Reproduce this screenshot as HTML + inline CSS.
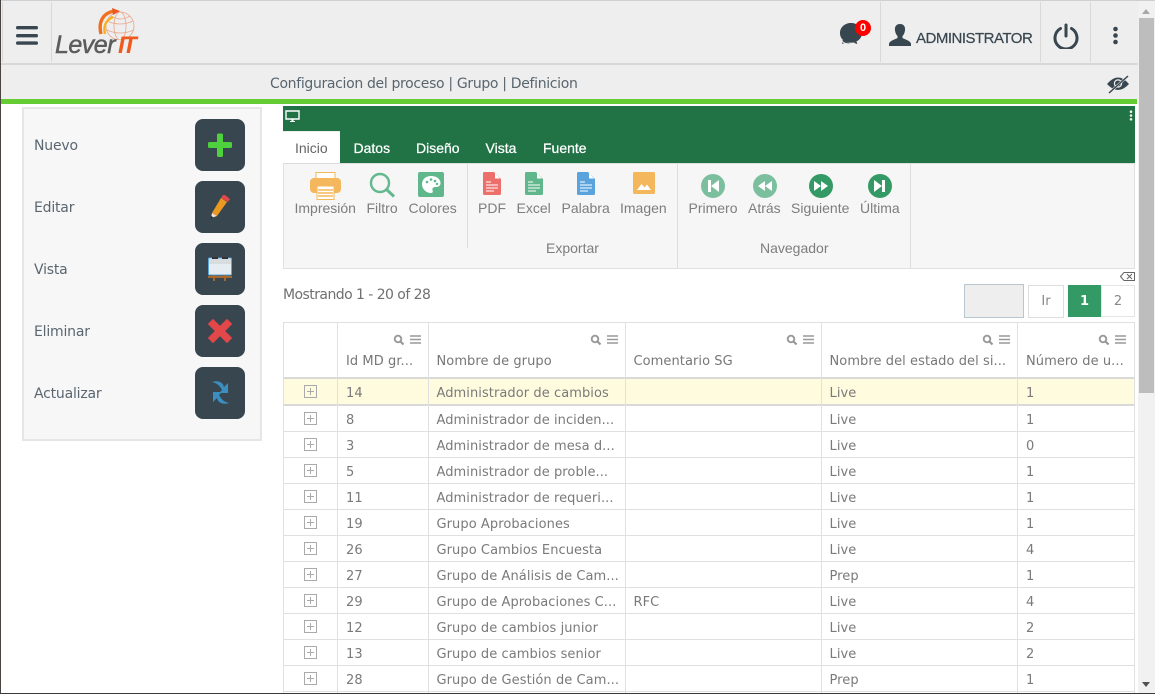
<!DOCTYPE html>
<html><head><meta charset="utf-8"><style>
html,body{margin:0;padding:0;width:1155px;height:694px;overflow:hidden;background:#fff}
body{position:relative;font-family:"DejaVu Sans",sans-serif;color:#777}
div,span,svg{position:absolute;box-sizing:border-box}
.v{width:1px;background:#e0e0e0}
.hd{left:283px;width:852px;height:1px;background:#e0e0e0}
.r{left:283px;width:852px;height:26px;font-size:13px;letter-spacing:.07px;line-height:30px;color:#7a7a7a;white-space:nowrap}
.r span{top:0}
.a{left:63px}.b{left:153.500px}.c{left:350.500px}.d{left:546.500px}.e{left:743px}
.p{left:21px;top:6px;width:13px;height:13px}
.m{font-size:14px;color:#5a6670;left:34px;letter-spacing:-.2px;white-space:nowrap}
.bt{left:195px;width:50px;height:52px;background:#38464f;border-radius:8px}
.t{font:14px "Liberation Sans",sans-serif;color:#7d7d7d;white-space:nowrap;top:200px}
.tab{font:14px "Liberation Sans",sans-serif;color:#fff;top:140px;white-space:nowrap;-webkit-text-stroke:.25px #fff}
.th{font-size:13px;letter-spacing:.07px;color:#777;top:352px;white-space:nowrap}
</style></head><body>
<div style="left:0;top:0;width:1138px;height:99px;background:#eee"></div>
<div style="left:0;top:0;width:1155px;height:1px;background:#ccd0d3"></div>
<div style="left:0;top:63px;width:1138px;height:2px;background:#d8d8d8"></div>
<div class="v" style="left:2px;top:2px;height:60px;background:#d8d8d8"></div>
<div class="v" style="left:51px;top:2px;height:60px;background:#d8d8d8"></div>
<div class="v" style="left:880px;top:2px;height:60px;background:#d8d8d8"></div>
<div class="v" style="left:1040px;top:2px;height:60px;background:#d8d8d8"></div>
<div class="v" style="left:1090px;top:2px;height:60px;background:#d8d8d8"></div>
<div style="left:1px;top:99px;width:1136px;height:5px;background:#66cc33"></div>

<svg style="left:16px;top:26px" width="22" height="19"><g fill="#38464f"><rect x="0" y="0" width="22" height="3.4" rx="1.7"/><rect x="0" y="8" width="22" height="3.4" rx="1.7"/><rect x="0" y="15.4" width="22" height="3.4" rx="1.7"/></g></svg>

<svg style="left:97px;top:8px" width="42" height="32" viewBox="0 0 42 32">
<g fill="none" stroke="#e9a589" stroke-width=".8"><circle cx="23" cy="18" r="14"/><ellipse cx="23" cy="18" rx="6" ry="14"/><path d="M10 13Q23 19 36 13M10 22Q23 28 37 22M14 8Q24 14 33 8"/></g>
<path d="M4 26C1 14 6 5 17 3" fill="none" stroke="#f0701e" stroke-width="3.4"/>
<path d="M8 26C6 18 9 12 16 9" fill="none" stroke="#f7b21a" stroke-width="2.4"/>
<path d="M15 0l8 3-7 4z" fill="#ea5a20"/>
</svg>
<span style="left:55px;top:31px;font:italic 25px 'Liberation Sans',sans-serif;letter-spacing:-.5px;color:#5c5c5c;white-space:nowrap;-webkit-text-stroke:.5px #5c5c5c">Lever</span>
<span style="left:118px;top:32px;font:italic bold 24px 'Liberation Sans',sans-serif;letter-spacing:-2.500px;color:#ee5a1f;white-space:nowrap">IT</span>

<svg style="left:840px;top:23px" width="24" height="25" viewBox="0 0 24 25"><path d="M11 0C5 0 0 4 0 10c0 3 1 5 3 7l-1 4 5-2c1 .4 3 .7 4 .7 6 0 11-4 11-9.700C22 4 17 0 11 0z" fill="#38464f"/><path d="M1 17q4 5 10 3.500M13 20l5 2-1-4" fill="#38464f" stroke="#eee"/></svg>
<div style="left:855px;top:20px;width:16px;height:16px;border-radius:50%;background:#f00;color:#fff;font:bold 11px/16px 'Liberation Sans',sans-serif;text-align:center">0</div>

<svg style="left:889px;top:24px" width="22" height="22" viewBox="0 0 22 22"><path d="M11 0c4 0 5.500 3 5 6.500-.3 2.500-1.500 4.500-2.500 5.500v2c1 1 7 2 8.500 5.500v2.500H0v-2.500C1.500 16 7.500 15 8.500 14v-2c-1-1-2.200-3-2.500-5.500C5.500 3 7 0 11 0z" fill="#38464f"/></svg>
<span style="left:916px;top:30px;font:15px 'Liberation Sans',sans-serif;color:#38464f;white-space:nowrap;letter-spacing:-.5px;-webkit-text-stroke:.2px #38464f">ADMINISTRATOR</span>

<svg style="left:1053px;top:23px" width="26" height="26" viewBox="0 0 26 26" fill="none" stroke="#38464f" stroke-width="3" stroke-linecap="round"><path d="M7.500 5.500a11 11 0 1 0 11 0"/><path d="M13 2v11"/></svg>
<svg style="left:1112px;top:26px" width="7" height="19"><g fill="#38464f"><circle cx="3.500" cy="3" r="2.300"/><circle cx="3.500" cy="9.500" r="2.300"/><circle cx="3.500" cy="16" r="2.300"/></g></svg>

<span style="left:270px;top:76px;font-size:14px;letter-spacing:-.33px;line-height:17px;color:#59656e;white-space:nowrap">Configuracion del proceso | Grupo | Definicion</span>
<svg style="left:1107px;top:74px" width="22" height="20" viewBox="0 0 22 20"><path d="M0 10Q11-3 22 10Q11 22 0 10z" fill="#38464f"/><circle cx="11" cy="9.500" r="4.200" fill="#eee"/><circle cx="11" cy="9.500" r="3" fill="#38464f"/><path d="M2 19L21 2" stroke="#eee" stroke-width="2.400"/><path d="M2 19L21 2" stroke="#38464f" stroke-width="1.500"/></svg>

<div style="left:1138px;top:1px;width:17px;height:692px;background:#f1f1f1"></div>
<div style="left:1139px;top:18px;width:15px;height:375px;background:#bdbdbd"></div>
<svg style="left:1141px;top:9px" width="10" height="5"><path d="M5 0l4 5H1z" fill="#a8a8a8"/></svg>
<svg style="left:1141px;top:682px" width="10" height="5"><path d="M5 5L1 0h8z" fill="#505050"/></svg>

<!-- left panel -->
<div style="left:22px;top:107px;width:240px;height:334px;background:#f7f7f7;border:2px solid #e6e6e6"></div>
<span class="m" style="top:137.500px">Nuevo</span>
<span class="m" style="top:199.500px">Editar</span>
<span class="m" style="top:261.500px">Vista</span>
<span class="m" style="top:323.500px">Eliminar</span>
<span class="m" style="top:385.500px">Actualizar</span>
<div class="bt" style="top:119px"></div><div class="bt" style="top:181px"></div><div class="bt" style="top:243px"></div><div class="bt" style="top:305px"></div><div class="bt" style="top:367px"></div>
<svg style="left:208px;top:133px" width="24" height="24"><path d="M9 2a1.500 1.500 0 0 1 1.500-1.500h3A1.500 1.500 0 0 1 15 2v7h7.500a1.500 1.500 0 0 1 1.500 1.500v3a1.500 1.500 0 0 1-1.500 1.500H15v7.500a1.500 1.500 0 0 1-1.500 1.500h-3A1.500 1.500 0 0 1 9 22.500V15H1.500A1.500 1.500 0 0 1 0 13.500v-3A1.500 1.500 0 0 1 1.500 9H9z" fill="#4fd13e"/></svg>
<svg style="left:209px;top:194px" width="22" height="26" viewBox="0 0 22 26"><path d="M12 4l6 4L8 22l-5-3z" fill="#eb9a21"/><path d="M14 1l2-0 5 4-2 3-7-4z" fill="#e2474a"/><path d="M3 19l5 3-6 2z" fill="#f3e4d0"/><path d="M2 22l2 1-2 2z" fill="#222"/></svg>
<svg style="left:208px;top:256px" width="24" height="25" viewBox="0 0 24 25"><rect x=".5" y="2" width="23" height="17" rx="1" fill="#e6edf2" stroke="#5aa7dc" stroke-width="1"/><rect x="1" y="3" width="22" height="5" fill="#d7dcdf"/><rect x="4" y="1" width="6" height="2" fill="#333"/><rect x="14" y="1" width="6" height="2" fill="#333"/><path d="M0 20h24v2H0z" fill="#a8672b"/><path d="M5 19h2v6H5zM16 19h2v6h-2z" fill="#a8672b"/></svg>
<svg style="left:208px;top:319px" width="24" height="24"><path d="M5 0.500L12 7.500 19 .5 23.500 5 16.500 12 23.500 19 19 23.500 12 16.500 5 23.500 .5 19 7.500 12 .5 5z" fill="#e2474a" stroke="#e2474a" stroke-linejoin="round"/></svg>
<svg style="left:210px;top:380px" width="21" height="25" viewBox="0 0 21 25"><path d="M2 2C8 0 13 2 14 7l4-4v10h-9l3-3C10 6 7 3 2 2z" fill="#3b8fc0"/><path d="M19 23c-6 2-11 0-12-5l-4 4V12h9l-3 3c2 4 5 7 10 8z" fill="#3b8fc0"/></svg>

<!-- ribbon -->
<div style="left:283px;top:106px;width:852px;height:57px;background:#217346"></div>
<div style="left:283px;top:131px;width:57px;height:32px;background:#fff;border-top:1px solid #eee"></div>
<div style="left:283px;top:163px;width:852px;height:106px;background:#f6f6f6;border:1px solid #e0e0e0;border-top:1px solid #ddd"></div>
<div class="v" style="left:467px;top:164px;height:84px;background:#ddd"></div>
<div class="v" style="left:677px;top:164px;height:104px;background:#ddd"></div>
<div class="v" style="left:910px;top:164px;height:104px;background:#ddd"></div>
<svg style="left:285px;top:110px" width="16" height="12"><path d="M1 1h13v8H1z" fill="none" stroke="#fff" stroke-width="1.400"/><path d="M5 11h5v1H5z" fill="#fff"/><path d="M6.500 9h2v2h-2z" fill="#fff"/></svg>
<svg style="left:1129px;top:110px" width="4" height="11"><g fill="#eee"><circle cx="2" cy="1.700" r="1.300"/><circle cx="2" cy="5.500" r="1.300"/><circle cx="2" cy="9.300" r="1.300"/></g></svg>
<span class="tab" style="left:295px;color:#666;-webkit-text-stroke:0">Inicio</span>
<span class="tab" style="left:353.500px">Datos</span>
<span class="tab" style="left:416px">Diseño</span>
<span class="tab" style="left:485.500px">Vista</span>
<span class="tab" style="left:543px">Fuente</span>

<svg style="left:310px;top:172px" width="31" height="28" viewBox="0 0 31 28"><rect x="6" y="0.500" width="19" height="8" fill="#fff" stroke="#f5b75c"/><rect x="0" y="6" width="31" height="15" rx="4" fill="#f5b75c"/><rect x="7" y="14" width="17" height="13.500" fill="#fff" stroke="#f5b75c"/><path d="M8 18h15M8 21h15M8 24h15" stroke="#f5b75c" stroke-width="1.500"/></svg>
<svg style="left:369px;top:172px" width="27" height="26" fill="none" stroke="#63b88e" stroke-width="2.400"><circle cx="11" cy="11" r="9"/><path d="M17 17l8 7.500" stroke-width="3"/></svg>
<svg style="left:418px;top:172px" width="26" height="25" viewBox="0 0 26 25"><rect width="26" height="25" rx="2" fill="#5fb78b"/><path d="M13 4C7 4 4 8 4 12c0 5 4 9 9 9 2 0 2-1.500 1.500-3-.5-2 1-3 3-3 3 0 5-1 5-4 0-4-4-7-9.500-7z" fill="#fff"/><g fill="#5fb78b"><circle cx="9" cy="10" r="1.300"/><circle cx="13" cy="7.500" r="1.300"/><circle cx="17" cy="9" r="1.300"/><circle cx="19" cy="12" r="1.200"/></g></svg>
<svg style="left:483px;top:172px" width="18" height="23" viewBox="0 0 18 23"><path d="M1.500 0H11l7 7v14.500a1.500 1.500 0 0 1-1.500 1.500h-15A1.500 1.500 0 0 1 0 21.500v-20A1.500 1.500 0 0 1 1.500 0z" fill="#ec6f6c"/><path d="M12 1l5 5.500h-5z" fill="#fff"/><path d="M3 10h5M3 13h12M3 16h12M3 19h8" stroke="#fff" stroke-width="1"/></svg>
<svg style="left:525px;top:172px" width="18" height="23" viewBox="0 0 18 23"><path d="M1.500 0H11l7 7v14.500a1.500 1.500 0 0 1-1.500 1.500h-15A1.500 1.500 0 0 1 0 21.500v-20A1.500 1.500 0 0 1 1.500 0z" fill="#5fb78b"/><path d="M12 1l5 5.500h-5z" fill="#fff"/><path d="M3 10h5M3 13h12M3 16h12M3 19h8" stroke="#fff" stroke-width="1"/></svg>
<svg style="left:577px;top:172px" width="18" height="23" viewBox="0 0 18 23"><path d="M1.500 0H11l7 7v14.500a1.500 1.500 0 0 1-1.500 1.500h-15A1.500 1.500 0 0 1 0 21.500v-20A1.500 1.500 0 0 1 1.500 0z" fill="#5aa3dc"/><path d="M12 1l5 5.500h-5z" fill="#fff"/><path d="M3 10h5M3 13h12M3 16h12M3 19h8" stroke="#fff" stroke-width="1"/></svg>
<svg style="left:633px;top:172px" width="22" height="22" viewBox="0 0 22 22"><rect width="22" height="22" rx="1.500" fill="#f5b75c"/><path d="M4 18l4.500-6 3 3.500 2.500-3 4 5.500z" fill="#fff"/></svg>

<svg style="left:701px;top:174px" width="24" height="24"><circle cx="12" cy="12" r="12" fill="#7cbf9f"/><path d="M7 6h3v12H7zM18 6v12l-8-6z" fill="#fff"/></svg>
<svg style="left:753px;top:174px" width="24" height="24"><circle cx="12" cy="12" r="12" fill="#7cbf9f"/><path d="M12 7v10l-7-5zM19 7v10l-7-5z" fill="#fff"/></svg>
<svg style="left:809px;top:174px" width="24" height="24"><circle cx="12" cy="12" r="12" fill="#349a65"/><path d="M5 7v10l7-5zM12 7v10l7-5z" fill="#fff"/></svg>
<svg style="left:868px;top:174px" width="24" height="24"><circle cx="12" cy="12" r="12" fill="#349a65"/><path d="M14 6h3v12h-3zM6 6v12l8-6z" fill="#fff"/></svg>

<span class="t" style="left:294.500px">Impresión</span>
<span class="t" style="left:366.500px">Filtro</span>
<span class="t" style="left:408.500px">Colores</span>
<span class="t" style="left:478px">PDF</span>
<span class="t" style="left:516.500px">Excel</span>
<span class="t" style="left:561.500px">Palabra</span>
<span class="t" style="left:620px">Imagen</span>
<span class="t" style="left:688.500px">Primero</span>
<span class="t" style="left:748px">Atrás</span>
<span class="t" style="left:791px">Siguiente</span>
<span class="t" style="left:860px">Última</span>
<span class="t" style="left:546px;top:240px">Exportar</span>
<span class="t" style="left:760px;top:240px">Navegador</span>

<!-- pager -->
<svg style="left:1120px;top:272px" width="15" height="10" fill="none" stroke="#666"><path d="M4 .5h10.500v8H4L.5 4.500z"/><path d="M7 2l5 5M12 2L7 7"/></svg>
<span style="left:283px;top:287px;font-size:14px;letter-spacing:-.55px;color:#707070;white-space:nowrap">Mostrando 1 - 20 of 28</span>
<div style="left:964px;top:284px;width:60px;height:34px;background:#eee;border:1px solid #b8c6cf"></div>
<div style="left:1028px;top:285px;width:36px;height:33px;border:1px solid #ddd;font-size:13px;line-height:31px;text-align:center;color:#888">Ir</div>
<div style="left:1068px;top:285px;width:33px;height:32px;background:#349a65;color:#fff;font-size:13px;line-height:33px;text-align:center;font-weight:bold">1</div>
<div style="left:1101px;top:285px;width:34px;height:32px;border:1px solid #e5e5e5;color:#888;font-size:13px;line-height:31px;text-align:center">2</div>

<!-- table -->
<div style="left:284px;top:378px;width:850px;height:26px;background:#fefbdf"></div>
<div class="hd" style="top:322px"></div>
<div class="hd" style="top:377px;height:2px;background:#d9d9d9"></div>
<div class="hd" style="top:404px;height:2px;background:#d9d9d9"></div>
<div class="hd" style="top:431px"></div><div class="hd" style="top:457px"></div><div class="hd" style="top:483px"></div><div class="hd" style="top:509px"></div><div class="hd" style="top:535px"></div><div class="hd" style="top:561px"></div><div class="hd" style="top:587px"></div><div class="hd" style="top:613px"></div><div class="hd" style="top:639px"></div><div class="hd" style="top:665px"></div><div class="hd" style="top:691px"></div>
<div class="v" style="left:283px;top:322px;height:371px"></div>
<div class="v" style="left:337px;top:322px;height:371px"></div>
<div class="v" style="left:428px;top:322px;height:371px"></div>
<div class="v" style="left:625px;top:322px;height:371px"></div>
<div class="v" style="left:821px;top:322px;height:371px"></div>
<div class="v" style="left:1017px;top:322px;height:371px"></div>
<div class="v" style="left:1134px;top:322px;height:371px"></div>

<span class="th" style="left:346px;top:353.500px">Id MD gr...</span>
<span class="th" style="left:436.500px;top:353.500px">Nombre de grupo</span>
<span class="th" style="left:633.500px;top:353.500px">Comentario SG</span>
<span class="th" style="left:829.500px;top:353.500px">Nombre del estado del si...</span>
<span class="th" style="left:1026px;top:353.500px">Número de u...</span>

<svg style="left:393px;top:334px" width="29" height="12"><g fill="none" stroke="#999"><circle cx="5" cy="5" r="3.300" stroke-width="1.900"/><path d="M7.500 7.500l3 3" stroke-width="2.200"/><path d="M17 2h11M17 5.500h11M17 9h11" stroke-width="1.500"/></g></svg>
<svg style="left:590px;top:334px" width="29" height="12"><g fill="none" stroke="#999"><circle cx="5" cy="5" r="3.300" stroke-width="1.900"/><path d="M7.500 7.500l3 3" stroke-width="2.200"/><path d="M17 2h11M17 5.500h11M17 9h11" stroke-width="1.500"/></g></svg>
<svg style="left:786px;top:334px" width="29" height="12"><g fill="none" stroke="#999"><circle cx="5" cy="5" r="3.300" stroke-width="1.900"/><path d="M7.500 7.500l3 3" stroke-width="2.200"/><path d="M17 2h11M17 5.500h11M17 9h11" stroke-width="1.500"/></g></svg>
<svg style="left:982px;top:334px" width="29" height="12"><g fill="none" stroke="#999"><circle cx="5" cy="5" r="3.300" stroke-width="1.900"/><path d="M7.500 7.500l3 3" stroke-width="2.200"/><path d="M17 2h11M17 5.500h11M17 9h11" stroke-width="1.500"/></g></svg>
<svg style="left:1098px;top:334px" width="29" height="12"><g fill="none" stroke="#999"><circle cx="5" cy="5" r="3.300" stroke-width="1.900"/><path d="M7.500 7.500l3 3" stroke-width="2.200"/><path d="M17 2h11M17 5.500h11M17 9h11" stroke-width="1.500"/></g></svg>

<div class="r" style="top:379px"><svg class="p" width="13" height="13"><path d="M.5.500h12v12H.5zM3 6.500h7M6.500 3v7" fill="none" stroke="#aaa"/></svg><span class="a">14</span><span class="b">Administrador de cambios</span><span class="d">Live</span><span class="e">1</span></div>
<div class="r" style="top:406px"><svg class="p" width="13" height="13"><path d="M.5.500h12v12H.5zM3 6.500h7M6.500 3v7" fill="none" stroke="#aaa"/></svg><span class="a">8</span><span class="b">Administrador de inciden...</span><span class="d">Live</span><span class="e">1</span></div>
<div class="r" style="top:432px"><svg class="p" width="13" height="13"><path d="M.5.500h12v12H.5zM3 6.500h7M6.500 3v7" fill="none" stroke="#aaa"/></svg><span class="a">3</span><span class="b">Administrador de mesa d...</span><span class="d">Live</span><span class="e">0</span></div>
<div class="r" style="top:458px"><svg class="p" width="13" height="13"><path d="M.5.500h12v12H.5zM3 6.500h7M6.500 3v7" fill="none" stroke="#aaa"/></svg><span class="a">5</span><span class="b">Administrador de proble...</span><span class="d">Live</span><span class="e">1</span></div>
<div class="r" style="top:484px"><svg class="p" width="13" height="13"><path d="M.5.500h12v12H.5zM3 6.500h7M6.500 3v7" fill="none" stroke="#aaa"/></svg><span class="a">11</span><span class="b">Administrador de requeri...</span><span class="d">Live</span><span class="e">1</span></div>
<div class="r" style="top:510px"><svg class="p" width="13" height="13"><path d="M.5.500h12v12H.5zM3 6.500h7M6.500 3v7" fill="none" stroke="#aaa"/></svg><span class="a">19</span><span class="b">Grupo Aprobaciones</span><span class="d">Live</span><span class="e">1</span></div>
<div class="r" style="top:536px"><svg class="p" width="13" height="13"><path d="M.5.500h12v12H.5zM3 6.500h7M6.500 3v7" fill="none" stroke="#aaa"/></svg><span class="a">26</span><span class="b">Grupo Cambios Encuesta</span><span class="d">Live</span><span class="e">4</span></div>
<div class="r" style="top:562px"><svg class="p" width="13" height="13"><path d="M.5.500h12v12H.5zM3 6.500h7M6.500 3v7" fill="none" stroke="#aaa"/></svg><span class="a">27</span><span class="b">Grupo de Análisis de Cam...</span><span class="d">Prep</span><span class="e">1</span></div>
<div class="r" style="top:588px"><svg class="p" width="13" height="13"><path d="M.5.500h12v12H.5zM3 6.500h7M6.500 3v7" fill="none" stroke="#aaa"/></svg><span class="a">29</span><span class="b">Grupo de Aprobaciones C...</span><span class="c">RFC</span><span class="d">Live</span><span class="e">4</span></div>
<div class="r" style="top:614px"><svg class="p" width="13" height="13"><path d="M.5.500h12v12H.5zM3 6.500h7M6.500 3v7" fill="none" stroke="#aaa"/></svg><span class="a">12</span><span class="b">Grupo de cambios junior</span><span class="d">Live</span><span class="e">2</span></div>
<div class="r" style="top:640px"><svg class="p" width="13" height="13"><path d="M.5.500h12v12H.5zM3 6.500h7M6.500 3v7" fill="none" stroke="#aaa"/></svg><span class="a">13</span><span class="b">Grupo de cambios senior</span><span class="d">Live</span><span class="e">2</span></div>
<div class="r" style="top:666px"><svg class="p" width="13" height="13"><path d="M.5.500h12v12H.5zM3 6.500h7M6.500 3v7" fill="none" stroke="#aaa"/></svg><span class="a">28</span><span class="b">Grupo de Gestión de Cam...</span><span class="d">Prep</span><span class="e">1</span></div>

<div style="left:0;top:0;width:1px;height:694px;background:#4a4440"></div>
<div style="left:0;top:693px;width:1155px;height:1px;background:#3a3a3a"></div>
</body></html>
